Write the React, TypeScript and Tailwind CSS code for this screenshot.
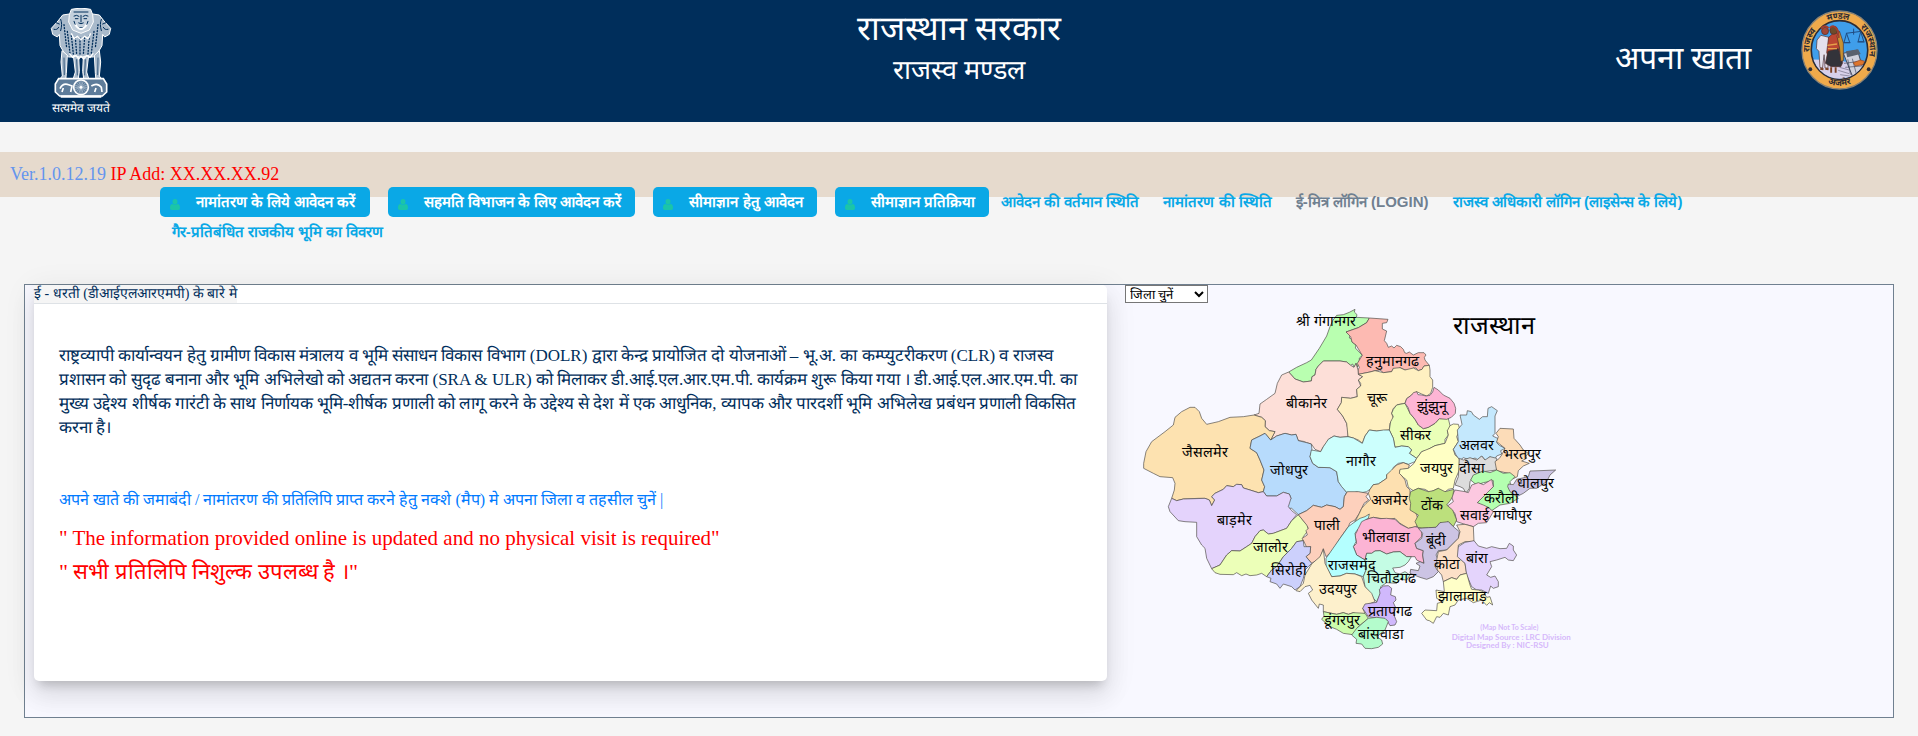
import { useState } from "react";

import { cx } from "class-variance-authority";

interface District {
  name: string;
  fill: string;
  points: string;
  x: number;
  y: number;
}

const DISTRICTS: District[] = [
  {
    name: "श्री गंगानगर",
    fill: "#b9ffb0",
    x: 648,
    y: 138,
    points:
      "735,88 733,96 741,104 739,112 778,114 770,128 745,143 708,156 720,164 718,174 726,178 726,186 738,195 736,204 757,226 748,234 748,242 742,262 738,250 732,262 728,252 722,256 710,246 690,243 640,243 625,258 618,268 615,285 606,290 604,303 580,306 555,297 536,276 560,262 590,248 604,240 628,205 650,168 660,140 668,122 680,106 700,104 718,97",
  },
  {
    name: "हनुमानगढ",
    fill: "#fdbab2",
    x: 846,
    y: 257,
    points:
      "778,114 834,118 830,128 817,130 817,147 830,153 823,182 830,190 835,202 845,198 852,204 860,196 872,200 880,208 884,218 890,220 898,216 910,225 925,218 942,218 948,225 943,232 945,240 958,256 942,258 936,268 925,272 918,264 910,264 898,272 885,270 870,263 862,268 850,265 845,275 820,278 810,270 795,272 780,276 745,283 744,270 748,262 742,250 757,226 738,195 726,186 722,170 708,156 745,143 770,128",
  },
  {
    name: "बीकानेर",
    fill: "#fddfd8",
    x: 588,
    y: 384,
    points:
      "536,276 515,285 502,310 495,340 470,358 450,372 447,400 432,405 455,412 466,422 465,440 478,452 495,455 482,480 500,468 525,460 545,465 558,463 565,482 580,484 590,488 604,492 615,508 632,515 640,500 650,488 655,478 672,468 690,472 714,470 714,450 710,430 698,408 682,388 694,368 695,352 722,355 742,350 740,328 752,318 745,300 758,290 745,283 744,270 738,250 732,262 722,256 710,246 690,243 640,243 625,258 618,268 615,285 606,290 604,303 580,306 555,297",
  },
  {
    name: "चूरू",
    fill: "#fff0c1",
    x: 800,
    y: 370,
    points:
      "745,283 758,290 745,300 752,310 752,318 740,328 742,350 722,355 695,352 694,368 682,388 698,408 710,430 714,470 730,474 745,480 757,490 765,468 778,450 800,453 838,450 840,430 850,415 845,400 850,385 862,374 885,370 890,356 905,345 920,335 935,342 950,348 962,340 968,322 968,300 960,290 960,270 958,256 942,258 936,268 925,272 910,264 885,270 870,263 850,265 845,275 820,278 795,272 780,276",
  },
  {
    name: "सीकर",
    fill: "#eaffb8",
    x: 915,
    y: 480,
    points:
      "885,370 860,375 850,388 845,400 850,410 842,425 838,450 850,475 855,502 875,498 895,500 905,510 898,520 920,535 935,515 948,512 960,505 975,497 1005,490 1005,478 1015,465 1012,452 1020,450 1020,437 1015,416 988,416 975,430 955,442 940,446 925,435 915,418 900,400",
  },
  {
    name: "झुंझुनू",
    fill: "#fdb5d5",
    x: 965,
    y: 392,
    points:
      "885,370 890,356 905,345 910,338 920,335 924,344 935,345 948,348 960,346 968,336 972,322 985,330 1000,345 1020,355 1032,370 1037,385 1036,400 1024,412 1010,418 988,416 975,430 955,442 940,446 925,435 915,418 900,400 894,382",
  },
  {
    name: "जैसलमेर",
    fill: "#fde2b0",
    x: 285,
    y: 532,
    points:
      "432,405 400,410 360,412 325,425 290,433 275,415 268,395 255,382 240,382 215,395 195,412 190,435 165,455 125,485 108,515 101,550 101,565 130,580 150,590 188,593 195,610 193,630 185,655 200,662 220,657 265,655 285,655 298,660 305,677 314,660 305,650 315,640 340,628 350,617 370,620 380,613 395,614 400,624 420,630 445,638 460,635 464,620 455,600 462,570 450,540 440,518 420,505 425,480 450,468 465,460 482,480 495,455 478,452 465,440 466,422 455,412",
  },
  {
    name: "जोधपुर",
    fill: "#b7dbfc",
    x: 538,
    y: 586,
    points:
      "482,480 500,468 525,460 545,465 558,463 565,482 590,488 604,492 606,510 600,530 608,550 625,562 660,563 680,575 685,605 710,637 703,650 700,680 690,688 675,680 650,675 635,682 610,676 590,692 565,704 545,685 530,685 535,665 543,655 538,642 520,637 500,648 470,648 460,635 464,620 455,600 462,570 450,540 440,518 420,505 425,480 450,468 465,460",
  },
  {
    name: "नागौर",
    fill: "#ccfffd",
    x: 752,
    y: 558,
    points:
      "604,510 632,515 640,500 655,478 672,468 690,472 714,470 730,474 757,490 765,468 778,450 800,453 820,450 838,450 850,475 855,502 875,498 895,500 905,510 898,520 920,535 915,545 895,553 880,548 865,550 850,562 845,580 830,584 830,595 805,612 790,614 780,628 770,635 755,638 740,636 725,640 710,637 695,620 685,605 680,575 660,563 625,562 608,550 600,530",
  },
  {
    name: "बाड़मेर",
    fill: "#e4d3fc",
    x: 372,
    y: 735,
    points:
      "185,655 175,680 180,695 205,722 225,725 260,727 260,770 275,795 285,805 290,835 305,866 330,855 350,825 365,812 390,813 410,800 425,790 435,770 450,752 460,750 475,762 490,760 530,745 545,722 560,704 545,692 535,680 543,655 538,642 520,637 500,648 470,648 460,635 445,638 420,630 400,624 395,614 380,613 370,620 350,617 340,628 315,640 305,650 314,660 305,677 298,660 285,655 220,657 200,662",
  },
  {
    name: "जालोर",
    fill: "#ecffb8",
    x: 482,
    y: 817,
    points:
      "565,704 580,722 592,735 595,750 580,770 580,782 560,785 545,805 520,830 500,860 485,870 470,890 455,880 440,885 420,887 408,882 395,887 380,878 370,884 330,883 315,878 305,866 330,855 350,825 365,812 390,813 410,800 425,790 435,770 450,752 460,750 475,762 490,760 530,745 545,722",
  },
  {
    name: "पाली",
    fill: "#fdd0bc",
    x: 650,
    y: 749,
    points:
      "565,704 590,692 610,676 635,682 650,675 675,680 690,688 700,680 703,650 712,635 745,635 775,640 768,650 776,660 762,670 755,685 748,700 735,720 720,728 715,740 690,775 665,815 648,830 640,806 630,835 605,850 588,830 600,820 602,800 590,802 582,785 576,775 592,765 588,752 595,745 590,735",
  },
  {
    name: "सिरोही",
    fill: "#ccd0fc",
    x: 538,
    y: 886,
    points:
      "580,782 582,800 602,800 600,820 588,830 605,850 595,860 585,870 580,895 570,920 555,930 545,920 520,912 510,925 500,912 480,905 483,895 470,890 485,870 500,860 520,830 545,805 560,785",
  },
  {
    name: "अजमेर",
    fill: "#fde0b0",
    x: 838,
    y: 675,
    points:
      "775,640 780,628 790,614 805,612 830,595 830,584 845,570 860,555 880,548 898,555 895,565 870,570 870,580 885,600 890,620 900,630 900,650 905,660 920,680 918,700 925,720 920,740 895,745 870,730 855,715 830,718 790,712 760,720 745,735 730,735 748,700 755,685 768,670 782,658",
  },
  {
    name: "जयपुर",
    fill: "#ffffc4",
    x: 978,
    y: 578,
    points:
      "1020,437 1030,432 1045,433 1050,450 1040,470 1045,485 1030,508 1035,525 1048,535 1048,570 1035,600 1030,625 1015,628 1000,640 985,625 960,637 945,628 925,625 910,632 895,622 890,600 880,592 868,580 870,568 895,565 912,550 920,535 935,515 960,505 975,497 1005,490 1015,465 1012,452",
  },
  {
    name: "अलवर",
    fill: "#c4e8fd",
    x: 1098,
    y: 510,
    points:
      "1145,380 1162,392 1155,408 1155,460 1148,468 1165,476 1160,488 1168,496 1185,505 1172,512 1175,522 1160,528 1152,542 1140,530 1128,543 1115,528 1105,540 1095,534 1080,540 1060,533 1050,541 1038,525 1030,508 1045,485 1042,450 1056,433 1050,405 1070,405 1072,392 1084,395 1090,405 1108,418 1118,410 1132,410 1134,385",
  },
  {
    name: "दौसा",
    fill: "#dcdcdc",
    x: 1086,
    y: 578,
    points:
      "1048,535 1060,540 1080,533 1100,540 1115,528 1125,540 1140,530 1160,535 1160,570 1120,575 1100,580 1080,605 1078,625 1068,640 1060,625 1050,620 1035,615 1045,590",
  },
  {
    name: "भरतपुर",
    fill: "#fcdcb8",
    x: 1235,
    y: 537,
    points:
      "1170,445 1210,447 1212,475 1230,495 1240,510 1255,520 1248,528 1250,535 1235,543 1258,550 1240,558 1225,572 1222,590 1208,597 1195,580 1160,572 1155,545 1168,535 1175,525 1185,505 1160,485 1165,470 1158,460",
  },
  {
    name: "करौली",
    fill: "#b4ffb0",
    x: 1173,
    y: 670,
    points:
      "1082,600 1090,585 1120,573 1140,578 1160,570 1180,580 1200,578 1215,590 1200,605 1205,635 1225,655 1200,670 1170,675 1145,692 1120,680 1102,668 1115,650 1130,635 1150,620 1150,602 1120,608 1100,615",
  },
  {
    name: "धोलपुर",
    fill: "#ccc4e4",
    x: 1275,
    y: 624,
    points:
      "1337,570 1320,585 1310,605 1280,625 1260,625 1240,640 1220,650 1200,635 1193,620 1195,612 1210,614 1220,598 1255,590 1260,573 1290,572",
  },
  {
    name: "सवाई माघौपुर",
    fill: "#fcc8e0",
    x: 1157,
    y: 720,
    points:
      "1145,598 1150,620 1125,645 1102,668 1120,675 1135,682 1150,695 1140,712 1130,728 1105,730 1090,740 1065,733 1040,725 1035,700 1010,680 1030,665 1025,650 1035,630 1065,635 1075,638 1085,615 1105,608 1120,614",
  },
  {
    name: "टोंक",
    fill: "#bce07c",
    x: 966,
    y: 690,
    points:
      "902,635 925,625 955,635 970,632 985,625 1005,635 1032,628 1028,648 1022,660 1010,675 1028,690 1040,720 1030,740 1015,725 1000,732 990,728 978,742 955,743 925,745 915,725 925,705 900,690 902,670 898,655",
  },
  {
    name: "भीलवाडा",
    fill: "#fcb4d4",
    x: 828,
    y: 786,
    points:
      "740,740 750,720 770,718 790,712 810,716 830,715 855,718 870,732 895,745 915,740 935,745 935,770 915,790 920,805 940,812 938,825 942,850 932,846 920,840 915,830 890,830 870,815 850,816 830,822 810,812 795,813 785,820 770,820 765,840 740,825 730,800 740,790 735,765 742,752",
  },
  {
    name: "बूंदी",
    fill: "#ccc4e4",
    x: 978,
    y: 794,
    points:
      "925,745 955,743 978,742 990,728 1015,725 1030,740 1048,755 1045,775 1025,795 1010,810 985,812 978,825 985,840 975,860 985,875 970,890 950,898 930,892 900,880 902,868 925,872 930,858 918,850 930,845 942,850 938,825 940,812 920,805 915,790 935,775 938,760",
  },
  {
    name: "कोटा",
    fill: "#fce0c8",
    x: 1010,
    y: 868,
    points:
      "1040,735 1065,733 1090,740 1092,785 1065,785 1045,795 1045,830 1065,850 1070,880 1050,885 1040,898 1025,893 1000,905 995,885 982,870 980,840 985,815 1010,810 1045,775 1050,755",
  },
  {
    name: "बांरा",
    fill: "#e4d4fc",
    x: 1101,
    y: 850,
    points:
      "1092,782 1105,798 1130,805 1145,800 1170,806 1190,805 1198,790 1210,798 1210,810 1220,825 1210,842 1195,840 1185,832 1160,840 1140,845 1145,860 1130,885 1142,892 1155,888 1165,905 1165,920 1150,925 1142,918 1135,940 1115,930 1100,930 1085,920 1070,885 1065,850 1042,830 1045,800 1065,787",
  },
  {
    name: "झालावाड़",
    fill: "#ffffc8",
    x: 1056,
    y: 962,
    points:
      "1000,905 1025,893 1040,898 1050,885 1070,880 1080,915 1085,928 1105,930 1120,935 1130,952 1140,950 1148,975 1138,968 1130,976 1115,960 1090,968 1070,955 1045,960 1035,975 1020,980 1015,1005 1000,1000 990,1012 980,1010 970,1030 958,1022 950,1020 935,1000 945,990 980,992 982,970 1000,965 980,955 978,930 1003,935",
  },
  {
    name: "राजसमंद",
    fill: "#b4ffff",
    x: 725,
    y: 869,
    points:
      "735,725 750,715 765,710 778,702 775,715 755,725 745,745 735,760 738,785 730,800 740,825 765,840 770,865 760,890 735,882 710,880 690,888 665,890 648,860 648,835 690,775 715,740",
  },
  {
    name: "चितौडगढ",
    fill: "#c4fce4",
    x: 845,
    y: 909,
    points:
      "765,840 770,820 785,820 795,813 810,812 830,822 850,816 870,815 890,830 904,830 895,845 885,855 870,862 848,864 855,878 870,882 885,875 900,885 890,900 870,898 860,910 830,908 812,920 810,945 800,965 790,955 780,940 765,920 760,890 770,865",
  },
  {
    name: "उदयपुर",
    fill: "#fdf0cc",
    x: 683,
    y: 941,
    points:
      "640,808 645,850 665,890 690,888 710,880 735,882 755,890 765,920 785,940 795,965 770,975 758,985 765,1000 745,1005 730,998 715,1003 700,998 680,1003 640,995 640,975 628,972 625,985 605,960 595,940 608,930 600,916 585,920 570,935 558,932 580,910 585,885 605,852 630,830",
  },
  {
    name: "प्रतापगढ",
    fill: "#d0b8fc",
    x: 840,
    y: 1007,
    points:
      "820,918 835,917 845,925 842,945 856,950 858,960 850,968 858,985 850,1000 860,1025 855,1035 840,1037 830,1020 800,1014 775,1010 758,985 765,972 800,967 810,940 808,928",
  },
  {
    name: "डूंगरपुर",
    fill: "#ccfcac",
    x: 695,
    y: 1035,
    points:
      "640,995 680,1003 700,998 715,1003 730,998 765,1000 775,1015 745,1040 735,1065 700,1060 680,1048 660,1040 635,1018 642,1008",
  },
  {
    name: "बांसवाडा",
    fill: "#b4fccc",
    x: 813,
    y: 1076,
    points:
      "775,1015 800,1012 825,1015 835,1025 825,1050 800,1070 815,1080 818,1092 805,1102 785,1106 765,1105 755,1092 738,1090 740,1078 725,1065 740,1045",
  },
];

const APPLY_LINKS = [
  "नामांतरण के लिये आवेदन करें",
  "सहमति विभाजन के लिए आवेदन करें",
  "सीमाज्ञान हेतु आवेदन",
  "सीमाज्ञान प्रतिक्रिया",
];

const NAV_LINKS = [
  { label: "आवेदन की वर्तमान स्थिति" },
  { label: "नामांतरण की स्थिति" },
  { label: "ई-मित्र लॉगिन (LOGIN)", muted: true },
  { label: "राजस्व अधिकारी लॉगिन (लाइसेन्स के लिये)" },
  { label: "गैर-प्रतिबंधित राजकीय भूमि का विवरण" },
];

const UserIcon = () => (
  <svg aria-hidden className="mt-1 h-[11px] w-2.5 shrink-0 fill-[#1bc5a8]" viewBox="0 0 20 22">
    <ellipse cx="10" cy="5.500" rx="5" ry="5.500" />
    <path d="M0 18c0-5 1.500-8 5-8 2.500 2.200 7.500 2.200 10 0 3.500 0 5 3 5 8 0 2.500-1.200 4-3.500 4h-13C1.200 22 0 20.500 0 18z" />
  </svg>
);

const Emblem = () => (
  <svg aria-hidden className="h-[90px] w-[62px]" viewBox="0 0 186 270">
    <g fill="#a9bacb" stroke="#fff" strokeWidth="3" strokeLinejoin="round">
      <path d="M58 18l-20 3-14 18-20 22 4 18 14 8 6-8 2 34 14 24 12 10h74l12-10 14-24 2-34 6 8 14-8 4-18-20-22-14-18-20-3z" />
      <path d="M36 128l-3 34 4 42-12 14h22l2-22 3-54zM148 128l4 34-4 42 12 14h-22l-2-22-3-54z" />
      <path d="M70 142l6 50-8 26h16l4-28-2-44zM116 142l-6 50 8 26h-16l-4-28 2-44z" />
    </g>
    <path d="M64 4q29-8 58 0l6 16 2 22-12 24-25 10-25-10-12-24 2-22z" fill="#c4d0dc" stroke="#fff" strokeWidth="3" />
    <g fill="none" stroke="#002e5b" strokeWidth="3" strokeLinecap="round">
      <path d="M72 24q8-5 15 1M99 25q7-6 15-1M76 32h8M102 32h8M93 22v20M86 45q7 5 14 0M72 40q4 18 21 20 17-2 21-20M78 54q15 14 30 0M72 12h42" />
      <path d="M18 44l10 4M12 64q10 3 14-6M32 34q6 14 0 34M168 44l-10 4M174 64q-10 3-14-6M154 34q-6 14 0 34" />
      <path
        d="M42 50l8 70M52 70l8 66M64 82l6 56M76 88l4 52M90 90v54M104 88l-4 52M118 82l-4 56M132 70l-8 66M144 50l-8 70"
        strokeDasharray="3 6"
        strokeWidth="4"
      />
      <path d="M42 150l1 50M144 150l-1 50M80 155l2 46M106 155l-2 46" strokeWidth="2" />
    </g>
    <path d="M76 50q17 26 34 0" fill="none" stroke="#fff" strokeWidth="6" />
    <path
      d="M64 76l8 16 10-7 11 10 11-10 10 7 8-16M58 136l10 12 10-5 8 10 7-8 8 8 9-10 10 5 10-12"
      fill="none"
      stroke="#fff"
      strokeWidth="4"
    />
    <path d="M26 212h134l10 16v24l-13 12H29l-13-12v-24z" fill="#5e7c9a" stroke="#fff" strokeWidth="5" />
    <path
      d="M30 242q8-18 26-12l10 4-4 18M36 252l4-12M124 234q18-12 30 4l2 14M134 252l4-12"
      fill="none"
      stroke="#fff"
      strokeWidth="5"
    />
    <circle cx="93" cy="238" r="22" fill="#5e7c9a" stroke="#fff" strokeWidth="5" />
    <path
      d="M93 218v40M73 238h40M79 224l28 28M107 224l-28 28M86 219l14 38M100 219l-14 38M74 231l38 14M74 245l38-14"
      stroke="#d5dfe9"
      strokeWidth="1.500"
    />
    <circle cx="93" cy="238" r="4" fill="#fff" />
    <path d="M32 266h122" stroke="#fff" strokeWidth="7" />
  </svg>
);

const BoardSeal = () => (
  <svg
    aria-label="राजस्व मण्डल राजस्थान अजमेर"
    className="h-20 w-[77px] overflow-visible"
    preserveAspectRatio="none"
    role="img"
    viewBox="0 0 240 240"
  >
    <defs>
      <path id="seal-top" d="M39 168A94 94 0 1 1 201 168" />
      <path id="seal-bottom" d="M44 196A108 108 0 0 0 196 196" />
      <clipPath id="seal-clip">
        <circle cx="120" cy="120" r="86" />
      </clipPath>
    </defs>
    <circle cx="120" cy="120" r="117" fill="#efaa4b" stroke="#8a8375" strokeWidth="4" />
    <circle cx="120" cy="120" r="88" fill="#3f9eea" stroke="#2d2b33" strokeWidth="5" />
    <g clipPath="url(#seal-clip)">
      <path d="M20 148l90 2 110 20v60H20z" fill="#d8d0ea" />
      <path d="M132 130l44-10 20 66-36 12z" fill="#cfd0dc" stroke="#40475a" strokeWidth="3" />
      <path d="M140 124l38-6 8 14-42 10z" fill="#59606e" />
      <path d="M146 148l8 46M160 146l12 44M134 160l50-6M138 172l50-4" stroke="#40475a" strokeWidth="2" />
      <path d="M163 158l22-8 14 4-6 10-24 4z" fill="#dd752d" stroke="#8b4325" strokeWidth="2" />
      <path d="M120 172l30 8M116 181l34 10M122 194l30 4" stroke="#6c6880" strokeWidth="2" />
    </g>
    <g stroke="#4e2b28" strokeWidth="2">
      <path d="M62 76l-12 14-2 26 8 8 3 48 8 2 5-40 3 40h9l3-92z" fill="#e4e0ec" />
      <path d="M86 82l-6 46 6 12h25l10-18-4-48-10-10z" fill="#bb4732" />
      <path d="M84 124l-8 36 18 10h30l6-12-14-42z" fill="#33333a" />
      <path d="M112 78l8 36 4 40 8-2V98l-12-34z" fill="#c99231" />
      <path d="M82 106l30-4M84 116h28" stroke="#e6a24a" strokeWidth="4" />
      <circle cx="75" cy="63" r="11" fill="#a24635" />
      <circle cx="102" cy="61" r="12" fill="#6e4b2a" />
      <path d="M63 56q10-14 23-2M90 54q12-14 25 8l3 22" fill="none" stroke="#a33d2d" strokeWidth="6" />
      <path d="M60 176l10 2M76 176l10 2M94 172v16M108 172v16" stroke="#7c4327" strokeWidth="6" />
    </g>
    <path
      d="M164 56v18M140 70l48-6M142 70l-8 28h18zM186 65l-8 30h18zM132 98h22M176 96h22"
      fill="none"
      stroke="#214b80"
      strokeWidth="3"
    />
    <circle cx="29" cy="178" r="6" fill="#2d2b33" />
    <circle cx="211" cy="178" r="6" fill="#2d2b33" />
    <g className="font-['Noto_Sans',sans-serif] font-bold" fill="#2d2b33" fontSize="27" textAnchor="middle">
      <text>
        <textPath href="#seal-top" startOffset="20%">
          राजस्व
        </textPath>
      </text>
      <text>
        <textPath href="#seal-top" startOffset="49%">
          मण्डल
        </textPath>
      </text>
      <text>
        <textPath href="#seal-top" startOffset="80%">
          राजस्थान
        </textPath>
      </text>
      <text>
        <textPath href="#seal-bottom" startOffset="50%">
          अजमेर
        </textPath>
      </text>
    </g>
  </svg>
);

const RajasthanMap = () => (
  <svg aria-label="राजस्थान" className="h-[354px] w-[480px]" role="img" viewBox="45 69 1440 1062">
    <g stroke="#4d4a46" strokeLinejoin="round" strokeWidth="2">
      {DISTRICTS.map(({ name, fill, points }) => (
        <polygon key={name} fill={fill} points={points} />
      ))}
    </g>
    <g className="font-['Liberation_Sans',sans-serif] font-light" fontSize="43" textAnchor="middle">
      {DISTRICTS.map(({ name, x, y }) => (
        <text key={name} x={x} y={y}>
          {name}
        </text>
      ))}
      <text fontSize="76" x="1152" y="162">
        राजस्थान
      </text>
    </g>
    <g className="font-['Lato',sans-serif] font-bold" fill="#d6b8fb" textAnchor="middle">
      <text fontSize="21" x="1198" y="1051">
        (Map Not To Scale)
      </text>
      <text fontSize="24" x="1204" y="1079">
        Digital Map Source : LRC Division
      </text>
      <text fontSize="24" x="1192" y="1105">
        Designed By : NIC-RSU
      </text>
    </g>
  </svg>
);

const Header = () => (
  <header className="grid h-[122px] grid-cols-3 items-start bg-[#002e5b] text-white">
    <div className="ml-[50px] flex w-[62px] flex-col items-center pt-2">
      <Emblem />
      <span className="mt-1 text-xs leading-3 font-medium whitespace-nowrap">सत्यमेव जयते</span>
    </div>
    <div className="pt-1 text-center">
      <h1 className="text-[34px] leading-[50px]">राजस्थान सरकार</h1>
      <h2 className="text-[27px] leading-8">राजस्व मण्डल</h2>
    </div>
    <div className="flex justify-end gap-[50px] pt-2.5 pr-10">
      <p className="pt-6 text-[32px] leading-12">अपना खाता</p>
      <BoardSeal />
    </div>
  </header>
);

const NavBar = () => (
  <nav className="relative mx-auto -mt-2.5 w-10/12 font-['Liberation_Sans',sans-serif] text-[15px] font-bold">
    <ul className="flex flex-wrap items-center">
      {APPLY_LINKS.map((label, index) => (
        <li key={label} className={index < APPLY_LINKS.length - 1 ? "mr-[18px]" : undefined}>
          <a className="flex h-[30px] items-center rounded-[5px] bg-[#0aa8e6] pr-3.5 pl-2.5 text-white" href="#">
            <UserIcon />
            <span className="ml-4">{label}</span>
          </a>
        </li>
      ))}
      {NAV_LINKS.map(({ label, muted }) => (
        <li key={label}>
          <a
            className={cx("flex h-[30px] items-center px-3", muted ? "text-[#708090]" : "text-[#0aa8e6]")}
            href="#"
          >
            {label}
          </a>
        </li>
      ))}
    </ul>
  </nav>
);

export default function App() {
  const [district, setDistrict] = useState("");

  return (
    <div className="min-h-screen bg-[#f5f5f5] font-['Liberation_Serif',serif]">
      <Header />

      <p className="mt-[30px] h-[45px] bg-[#e6dacd] px-2.5 text-lg leading-[44px] text-[#6495ed]">
        Ver.1.0.12.19 <span className="text-[#ff0000]">IP Add: XX.XX.XX.92</span>
      </p>

      <NavBar />

      <main className="mx-6 mt-[37px] grid grid-cols-12 border border-[#708090] bg-[#f8f8ff] pb-9">
        <section className="col-span-7 pr-2 pl-[9px]">
          <div className="min-h-[396px] rounded-[5px] bg-white text-[#002e5b] shadow-[0_8px_10px_-5px_rgba(0,0,0,0.2),0_16px_24px_2px_rgba(0,0,0,0.07),0_6px_30px_5px_rgba(0,0,0,0.06)]">
            <h3 className="border-b border-[#dee2e6] text-sm leading-[18px]">
              <span className="inline-block bg-[#f5f5f5]">ई - धरती (डीआईएलआरएमपी) के बारे मे</span>
            </h3>
            <div className="px-[25px] pt-10">
              <p className="text-[17px] leading-6">
                राष्ट्रव्यापी कार्यान्वयन हेतु ग्रामीण विकास मंत्रालय व भूमि संसाधन विकास विभाग (DOLR) द्वारा केन्द्र
                प्रायोजित दो योजनाओं – भू.अ. का कम्प्युटरीकरण (CLR) व राजस्व प्रशासन को सुदृढ बनाना और भूमि अभिलेखो को
                अद्यतन करना (SRA &amp; ULR) को मिलाकर डी.आई.एल.आर.एम.पी. कार्यक्रम शुरू किया गया । डी.आई.एल.आर.एम.पी.
                का मुख्य उद्देश्य शीर्षक गारंटी के साथ निर्णायक भूमि-शीर्षक प्रणाली को लागू करने के उद्देश्य से देश में
                एक आधुनिक, व्यापक और पारदर्शी भूमि अभिलेख प्रबंधन प्रणाली विकसित करना है।
              </p>
              <p className="mt-12 text-base leading-6 text-[#007bff]">
                अपने खाते की जमाबंदी / नामांतरण की प्रतिलिपि प्राप्त करने हेतु नक्शे (मैप) मे अपना जिला व तहसील चुनें |
              </p>
              <p className="mt-2.5 text-[21px] leading-8 text-[#ff0000]">
                " The information provided online is updated and no physical visit is required"
              </p>
              <p className="text-[22px] leading-9 text-[#ff0000]">" सभी प्रतिलिपि निशुल्क उपलब्ध है ।"</p>
            </div>
          </div>
        </section>

        <section className="col-span-5 pl-2.5">
          <select
            aria-label="जिला चुनें"
            className="block h-[18px] w-[83px] border border-[#767676] bg-white font-['Liberation_Sans',sans-serif] text-[13px] leading-4 text-black"
            onChange={(event) => setDistrict(event.target.value)}
            value={district}
          >
            <option value="">जिला चुनें</option>
            {DISTRICTS.map(({ name }) => (
              <option key={name}>{name}</option>
            ))}
          </select>
          <RajasthanMap />
        </section>
      </main>
    </div>
  );
}
